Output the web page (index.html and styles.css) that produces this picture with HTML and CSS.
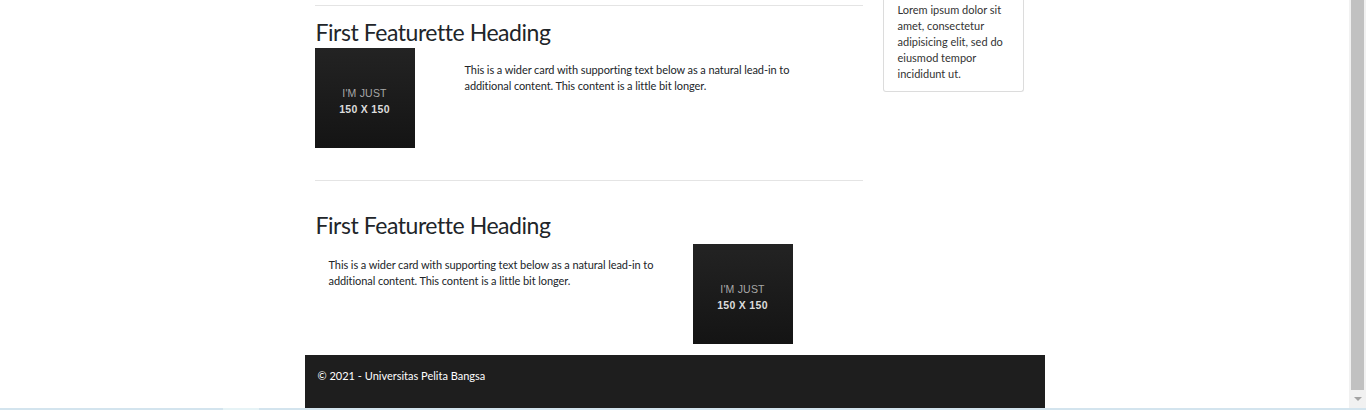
FILE: index.html
```html
<!DOCTYPE html>
<html lang="id">
<head>
<meta charset="utf-8">
<title>Featurette</title>
<link rel="stylesheet" href="styles.css">
</head>
<body>
<div class="screen">
  <div class="viewport">
    <div class="page">
      <div class="container">
        <div class="row">
          <main class="main">
            <hr class="rule">
            <section class="featurette">
              <h2 class="heading">First Featurette Heading</h2>
              <div class="feature-row">
                <div class="img-col">
                  <div class="ph"><span class="ph-a">I'M JUST</span><span class="ph-b">150 X 150</span></div>
                </div>
                <p class="lead-text first">This is a wider card with supporting text below as a natural lead-in to additional content. This content is a little bit longer.</p>
              </div>
            </section>
            <hr class="rule second-rule">
            <section class="featurette two">
              <h2 class="heading">First Featurette Heading</h2>
              <div class="feature-row">
                <p class="lead-text second">This is a wider card with supporting text below as a natural lead-in to additional content. This content is a little bit longer.</p>
                <div class="ph"><span class="ph-a">I'M JUST</span><span class="ph-b">150 X 150</span></div>
              </div>
            </section>
          </main>
          <aside class="side">
            <div class="card">
              <p class="card-text">Lorem ipsum dolor sit amet, consectetur adipisicing elit, sed do eiusmod tempor incididunt ut.</p>
            </div>
          </aside>
        </div>
        <footer class="footer">© 2021 - Universitas Pelita Bangsa</footer>
      </div>
    </div>
    <div class="scrollbar">
      <div class="thumb"></div>
      <div class="arrow"></div>
    </div>
  </div>
  <div class="strip"><span class="strip-light"></span></div>
</div>
</body>
</html>
```
FILE: styles.css
```css
* { box-sizing: border-box; }
html, body { margin: 0; padding: 0; background: #fff; }
body { font-family: "Lato", "Noto Sans", sans-serif; color: #212529; }
.screen { width: 1366px; height: 410px; display: flex; flex-direction: column; overflow: hidden; }
.viewport { display: flex; flex: 1; min-height: 0; }
.page { flex: 1; min-width: 0; overflow: hidden; }
.container { width: 740px; margin: 0 auto; }
.row { display: flex; padding: 0 10px; gap: 20px; }
.main { width: 548px; }
.rule { margin: 5px 0 0; border: 0; border-top: 1px solid #e4e4e4; height: 0; }
.second-rule { margin-top: 32px; }
.heading { margin: 12px 0 0 1px; font-size: 23px; letter-spacing: -0.45px; font-weight: 400; line-height: 28px; color: #212529; }
.featurette.two .heading { margin-top: 30px; }
.feature-row { display: flex; align-items: flex-start; margin-top: 2px; }
.featurette.two .feature-row { margin-top: 5px; }
.img-col { width: 150px; flex: none; }
.ph { width: 100px; height: 100px; flex: none; background: linear-gradient(#232323, #141414); display: flex; flex-direction: column; align-items: center; justify-content: center; gap: 5px; padding-top: 7px; font-family: "Liberation Sans", sans-serif; }
.ph-a { color: #a8a8a8; font-size: 10.5px; line-height: 11px; letter-spacing: 0.2px; }
.ph-b { color: #dcdcdc; font-size: 10.5px; line-height: 11px; font-weight: 700; letter-spacing: 0.3px; }
.lead-text { margin: 0; font-size: 11px; line-height: 16px; color: #212529; letter-spacing: -0.08px; }
.lead-text.first { width: 340px; padding-top: 14px; }
.lead-text.second { width: 378px; padding: 13px 20px 0 14px; }
.side { width: 141px; }
.card { border: 1px solid #dcdcdc; border-top: 0; border-radius: 0 0 3px 3px; padding: 2px 14px 9px; }
.card-text { margin: 0; font-size: 11px; line-height: 16px; color: #333; }
.footer { margin-top: 11px; height: 53px; background: #1e1e1e; color: #fff; font-size: 11px; line-height: 16px; padding: 13px 13px; }
.scrollbar { width: 17px; flex: none; background: #f1f1f1; display: flex; flex-direction: column; align-items: center; }
.thumb { width: 13px; height: 390px; background: #c1c1c1; }
.arrow { margin-top: 7px; width: 0; height: 0; border-left: 4px solid transparent; border-right: 4px solid transparent; border-top: 4px solid #a3a3a3; }
.strip { height: 2px; background: #d3e4ee; display: flex; }
.strip-light { margin-left: 223px; width: 36px; background: #e6f3f6; }
```
